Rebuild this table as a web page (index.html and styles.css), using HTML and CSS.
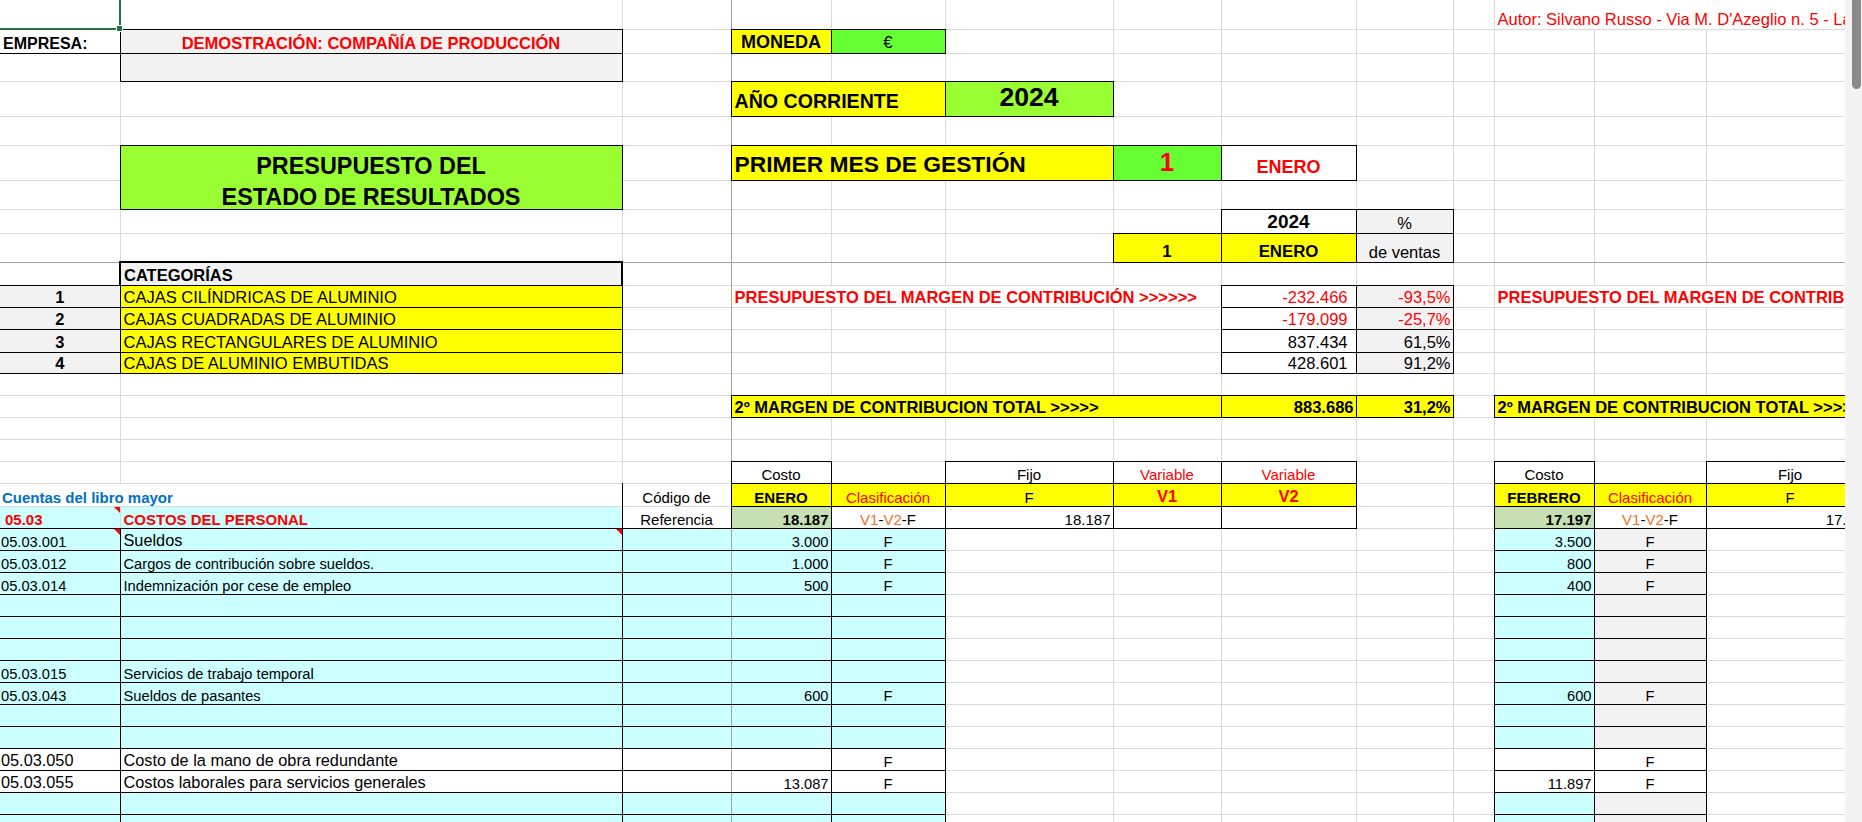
FILE: index.html
```html
<!DOCTYPE html>
<html lang="es">
<head>
<meta charset="utf-8">
<title>Presupuesto del estado de resultados</title>
<link rel="stylesheet" href="styles.css">
</head>
<body>
<div class="app">
<div class="sheet">
<table class="grid">
<colgroup>
<col class="cA"><col class="cB"><col class="cC"><col class="cD"><col class="cE"><col class="cF"><col class="cG"><col class="cH"><col class="cI"><col class="cJ"><col class="cK"><col class="cL"><col class="cM">
</colgroup>
<tbody>
<tr class="h29">
<td class="sel"></td><td></td><td></td><td></td><td></td><td></td><td></td><td></td><td></td><td></td>
<td colspan="3" class="red author">Autor: Silvano Russo - Via M. D'Azeglio n. 5 - La</td>
</tr>
<tr class="h24">
<td class="b bb f16">EMPRESA:</td>
<td class="gry box red b c">DEMOSTRACIÓN: COMPAÑÍA DE PRODUCCIÓN</td>
<td></td>
<td class="yel box b c f18">MONEDA</td>
<td class="grn box c f17">€</td>
<td></td><td></td><td></td><td></td><td></td><td></td><td></td><td></td>
</tr>
<tr class="h28">
<td></td><td class="gry box"></td><td></td><td></td><td></td><td></td><td></td><td></td><td></td><td></td><td></td><td></td><td></td>
</tr>
<tr class="h35 pb3">
<td></td><td></td><td></td>
<td colspan="2" class="yel box b f20">AÑO CORRIENTE</td>
<td class="lime box b c f27">2024</td>
<td></td><td></td><td></td><td></td><td></td><td></td><td></td>
</tr>
<tr class="h29">
<td></td><td></td><td></td><td></td><td></td><td></td><td></td><td></td><td></td><td></td><td></td><td></td><td></td>
</tr>
<tr class="h35 pb2">
<td></td>
<td rowspan="2" class="lime box ttl"><div>PRESUPUESTO DEL<br>ESTADO DE RESULTADOS</div></td>
<td></td>
<td colspan="3" class="yel box b f22">PRIMER MES DE GESTIÓN</td>
<td class="grn box b c red f26">1</td>
<td class="box b c red f18">ENERO</td>
<td></td><td></td><td></td><td></td><td></td>
</tr>
<tr class="h29">
<td></td><td></td><td></td><td></td><td></td><td></td><td></td><td></td><td></td><td></td><td></td><td></td>
</tr>
<tr class="h24">
<td></td><td></td><td></td><td></td><td></td><td></td><td></td>
<td class="box b c f19">2024</td>
<td class="gry box c">%</td>
<td></td><td></td><td></td><td></td>
</tr>
<tr class="h29 fz">
<td></td><td></td><td></td><td></td><td></td><td></td>
<td class="yel box b c f17">1</td>
<td class="yel box b c f17">ENERO</td>
<td class="gry box c">de ventas</td>
<td></td><td></td><td></td><td></td>
</tr>
<tr class="h23">
<td></td><td class="gry b thick">CATEGORÍAS</td><td></td><td></td><td></td><td></td><td></td><td></td><td></td><td></td><td></td><td></td><td></td>
</tr>
<tr>
<td class="gry box b c">1</td>
<td class="yel box">CAJAS CILÍNDRICAS DE ALUMINIO</td>
<td></td>
<td colspan="4" class="red b">PRESUPUESTO DEL MARGEN DE CONTRIBUCIÓN &gt;&gt;&gt;&gt;&gt;&gt;</td>
<td class="box r pr8 red">-232.466</td>
<td class="gry box r red">-93,5%</td>
<td></td>
<td colspan="3" class="red b">PRESUPUESTO DEL MARGEN DE CONTRIBUCIÓN &gt;&gt;&gt;&gt;&gt;&gt;</td>
</tr>
<tr>
<td class="gry box b c">2</td>
<td class="yel box">CAJAS CUADRADAS DE ALUMINIO</td>
<td></td><td></td><td></td><td></td><td></td>
<td class="box r pr8 red">-179.099</td>
<td class="gry box r red">-25,7%</td>
<td></td><td></td><td></td><td></td>
</tr>
<tr class="h23">
<td class="gry box b c">3</td>
<td class="yel box">CAJAS RECTANGULARES DE ALUMINIO</td>
<td></td><td></td><td></td><td></td><td></td>
<td class="box r pr8">837.434</td>
<td class="gry box r">61,5%</td>
<td></td><td></td><td></td><td></td>
</tr>
<tr class="h21">
<td class="gry box b c">4</td>
<td class="yel box">CAJAS DE ALUMINIO EMBUTIDAS</td>
<td></td><td></td><td></td><td></td><td></td>
<td class="box r pr8">428.601</td>
<td class="gry box r">91,2%</td>
<td></td><td></td><td></td><td></td>
</tr>
<tr>
<td></td><td></td><td></td><td></td><td></td><td></td><td></td><td></td><td></td><td></td><td></td><td></td><td></td>
</tr>
<tr>
<td></td><td></td><td></td>
<td colspan="4" class="yel box b">2º MARGEN DE CONTRIBUCION TOTAL &gt;&gt;&gt;&gt;&gt;</td>
<td class="yel box b r">883.686</td>
<td class="yel box b r">31,2%</td>
<td></td>
<td colspan="3" class="yel box b">2º MARGEN DE CONTRIBUCION TOTAL &gt;&gt;&gt;&gt;&gt;</td>
</tr>
<tr>
<td></td><td></td><td></td><td></td><td></td><td></td><td></td><td></td><td></td><td></td><td></td><td></td><td></td>
</tr>
<tr>
<td></td><td></td><td></td><td></td><td></td><td></td><td></td><td></td><td></td><td></td><td></td><td></td><td></td>
</tr>
<tr class="s">
<td></td><td></td><td></td>
<td class="bt bl br c">Costo</td>
<td></td>
<td class="box c">Fijo</td>
<td class="box c red">Variable</td>
<td class="box c red">Variable</td>
<td></td><td></td>
<td class="bt bl br c">Costo</td>
<td></td>
<td class="box c">Fijo</td>
</tr>
<tr class="h23 s">
<td colspan="2" class="blu b lead">Cuentas del libro mayor</td>
<td class="bl br c">Código de</td>
<td class="yel box b c">ENERO</td>
<td class="yel box c red">Clasificación</td>
<td class="yel box c">F</td>
<td class="yel box c red b f16">V1</td>
<td class="yel box c red b f16">V2</td>
<td></td><td></td>
<td class="yel box b c">FEBRERO</td>
<td class="yel box c red">Clasificación</td>
<td class="yel box c">F</td>
</tr>
<tr class="s">
<td class="cyn red b ind cm">05.03</td>
<td class="cyn red b f15">COSTOS DEL PERSONAL</td>
<td class="bl br bb c">Referencia</td>
<td class="olv box b r">18.187</td>
<td class="box c"><span class="org">V1</span>-<span class="org">V2</span>-F</td>
<td class="box r">18.187</td>
<td class="box"></td>
<td class="box"></td>
<td></td><td></td>
<td class="olv box b r">17.197</td>
<td class="box c"><span class="org">V1</span>-<span class="org">V2</span>-F</td>
<td class="box r">17.197</td>
</tr>
<tr class="lr">
<td class="cm">05.03.001</td><td class="f16 cm">Sueldos</td><td></td><td>3.000</td><td>F</td>
<td></td><td></td><td></td><td></td><td></td>
<td>3.500</td><td>F</td><td></td>
</tr>
<tr class="lr">
<td>05.03.012</td><td>Cargos de contribución sobre sueldos.</td><td></td><td>1.000</td><td>F</td>
<td></td><td></td><td></td><td></td><td></td>
<td>800</td><td>F</td><td></td>
</tr>
<tr class="lr">
<td>05.03.014</td><td>Indemnización por cese de empleo</td><td></td><td>500</td><td>F</td>
<td></td><td></td><td></td><td></td><td></td>
<td>400</td><td>F</td><td></td>
</tr>
<tr class="lr">
<td></td><td></td><td></td><td></td><td></td><td></td><td></td><td></td><td></td><td></td><td></td><td></td><td></td>
</tr>
<tr class="lr">
<td></td><td></td><td></td><td></td><td></td><td></td><td></td><td></td><td></td><td></td><td></td><td></td><td></td>
</tr>
<tr class="lr">
<td></td><td></td><td></td><td></td><td></td><td></td><td></td><td></td><td></td><td></td><td></td><td></td><td></td>
</tr>
<tr class="lr">
<td>05.03.015</td><td>Servicios de trabajo temporal</td><td></td><td></td><td></td>
<td></td><td></td><td></td><td></td><td></td>
<td></td><td></td><td></td>
</tr>
<tr class="lr">
<td>05.03.043</td><td>Sueldos de pasantes</td><td></td><td>600</td><td>F</td>
<td></td><td></td><td></td><td></td><td></td>
<td>600</td><td>F</td><td></td>
</tr>
<tr class="lr">
<td></td><td></td><td></td><td></td><td></td><td></td><td></td><td></td><td></td><td></td><td></td><td></td><td></td>
</tr>
<tr class="lr">
<td></td><td></td><td></td><td></td><td></td><td></td><td></td><td></td><td></td><td></td><td></td><td></td><td></td>
</tr>
<tr class="lr wh">
<td class="f16">05.03.050</td><td class="f16">Costo de la mano de obra redundante</td><td></td><td></td><td>F</td>
<td></td><td></td><td></td><td></td><td></td>
<td></td><td>F</td><td></td>
</tr>
<tr class="lr wh">
<td class="f16">05.03.055</td><td class="f16">Costos laborales para servicios generales</td><td></td><td>13.087</td><td>F</td>
<td></td><td></td><td></td><td></td><td></td>
<td>11.897</td><td>F</td><td></td>
</tr>
<tr class="lr">
<td></td><td></td><td></td><td></td><td></td><td></td><td></td><td></td><td></td><td></td><td></td><td></td><td></td>
</tr>
<tr class="lr">
<td></td><td></td><td></td><td></td><td></td><td></td><td></td><td></td><td></td><td></td><td></td><td></td><td></td>
</tr>
</tbody>
</table>
</div>
<div class="vscroll"><div class="thumb"></div></div>
</div>
</body>
</html>
```

FILE: styles.css
```css
html, body {
  margin: 0;
  padding: 0;
  overflow: hidden;
  background: #fff;
}

.app {
  display: flex;
  width: 1862px;
  height: 822px;
  overflow: hidden;
}
.sheet {
  flex: 0 0 1845px;
  width: 1845px;
  height: 822px;
  overflow: hidden;
}

.grid {
  border-collapse: collapse;
  table-layout: fixed;
  width: 1874px;
  font-family: "Liberation Sans", Arial, sans-serif;
  font-size: 16.5px;
  color: #000;
  border-top: hidden;
  border-left: hidden;
}

/* column widths */
.cA { width: 120px; }
.cB { width: 502px; }
.cC { width: 109px; border-right: 1px double #a3a3a3; }
.cD { width: 100px; }
.cE { width: 114px; }
.cF { width: 168px; }
.cG { width: 108px; }
.cH { width: 135px; }
.cI { width: 97px; }
.cJ { width: 41px; }
.cK { width: 100px; }
.cL { width: 112px; }
.cM { width: 168px; }

/* rows */
tr { height: 22px; }
.h21 { height: 21px; }
.h23 { height: 23px; }
.h24 { height: 24px; }
.h28 { height: 28px; }
.h29 { height: 29px; }
.h35 { height: 35px; }
.fz { border-bottom: 1px double #a3a3a3; }

td {
  border: 1px solid #dadada;
  padding: 0 3px;
  vertical-align: bottom;
  white-space: nowrap;
  overflow: visible;
  line-height: normal;
}
.pb2 > td { padding-bottom: 2px; }
.pb3 > td { padding-bottom: 3px; }

/* black borders (double at 1px paints as solid and wins over gridlines) */
.box { border: 1px double #000; }
.bt { border-top: 1px double #000; }
.bb { border-bottom: 1px double #000; }
.bl { border-left: 1px double #000; }
.br { border-right: 1px double #000; }
.thick {
  border-top: 2px solid #000;
  border-left: 2px solid #000;
  border-right: 2px solid #000;
  border-bottom: 1px double #000;
}

/* fills */
.yel { background: #ffff00; }
.grn { background: #66ff33; }
.lime { background: #99ff33; }
.gry { background: #f2f2f2; }
.cyn { background: #ccffff; }
.olv { background: #c6e0b4; }

/* text */
.b { font-weight: bold; }
.red { color: #ff0000; }
.blu { color: #0070c0; }
.org { color: #f7702a; }
.c { text-align: center; }
.r { text-align: right; padding-right: 2px; }
.pr8 { padding-right: 8px; }
.ind { padding-left: 5px; }
.lead { padding-left: 2px; }
.f15 { font-size: 15px; }
.f16 { font-size: 16px; }
.f17 { font-size: 16.8px; }
.f18 { font-size: 18px; }
.f19 { font-size: 19px; }
.f20 { font-size: 19.6px; }
.f22 { font-size: 22.8px; }
.f26 { font-size: 26px; }
.f27 { font-size: 26.6px; }
.s > td { font-size: 15px; }
.s > td.f16 { font-size: 16.5px; }
.s > td.f15 { font-size: 15px; }

.author { padding-left: 3px; font-size: 16.5px; }

/* title block */
.ttl {
  vertical-align: top;
  text-align: center;
  font-weight: bold;
  font-size: 23.4px;
  padding-top: 5px;
  white-space: normal;
}
.ttl div {
  height: 54px;
  line-height: 31px;
}

/* ledger rows */
.lr > td { font-size: 14.7px; }
.lr > td.f16 { font-size: 16.3px; }
.lr > td:nth-child(-n+5) {
  background: #ccffff;
  border-top: 1px double #000;
  border-bottom: 1px double #000;
}
.lr > td:nth-child(1) { border-right: 1px double #000; padding-left: 1px; }
.lr > td:nth-child(2) { border-left: 1px double #000; border-right: 1px double #000; }
.lr > td:nth-child(4) { border-right: 1px double #000; text-align: right; padding-right: 2px; }
.lr > td:nth-child(5) { border-right: 1px double #000; text-align: center; }
.lr > td:nth-child(11) {
  background: #ccffff;
  border: 1px double #000;
  text-align: right;
  padding-right: 2px;
}
.lr > td:nth-child(12) {
  background: #f2f2f2;
  border: 1px double #000;
  text-align: center;
}
.lr.wh > td:nth-child(-n+5),
.lr.wh > td:nth-child(11),
.lr.wh > td:nth-child(12) { background: #fff; }

/* selected cell A1 */
.sel {
  position: relative;
  border-right: 2px solid #217346;
  border-bottom: 2px solid #217346;
}
.sel::after {
  content: "";
  position: absolute;
  right: -4px;
  bottom: -4px;
  width: 5px;
  height: 5px;
  background: #217346;
  border: 1px solid #fff;
  z-index: 2;
}

/* comment indicator */
.cm { position: relative; }
.cm::after {
  content: "";
  position: absolute;
  top: 0;
  right: 0;
  border-style: solid;
  border-width: 0 6px 6px 0;
  border-color: transparent #ff0000 transparent transparent;
}

/* vertical scrollbar */
.vscroll {
  flex: 0 0 17px;
  width: 17px;
  height: 822px;
  background: #f3f3f3;
  position: relative;
}
.thumb {
  position: absolute;
  top: 0;
  right: 1px;
  width: 9px;
  height: 89px;
  background: #8a8a8a;
  border-radius: 0 0 5px 5px;
}
```
